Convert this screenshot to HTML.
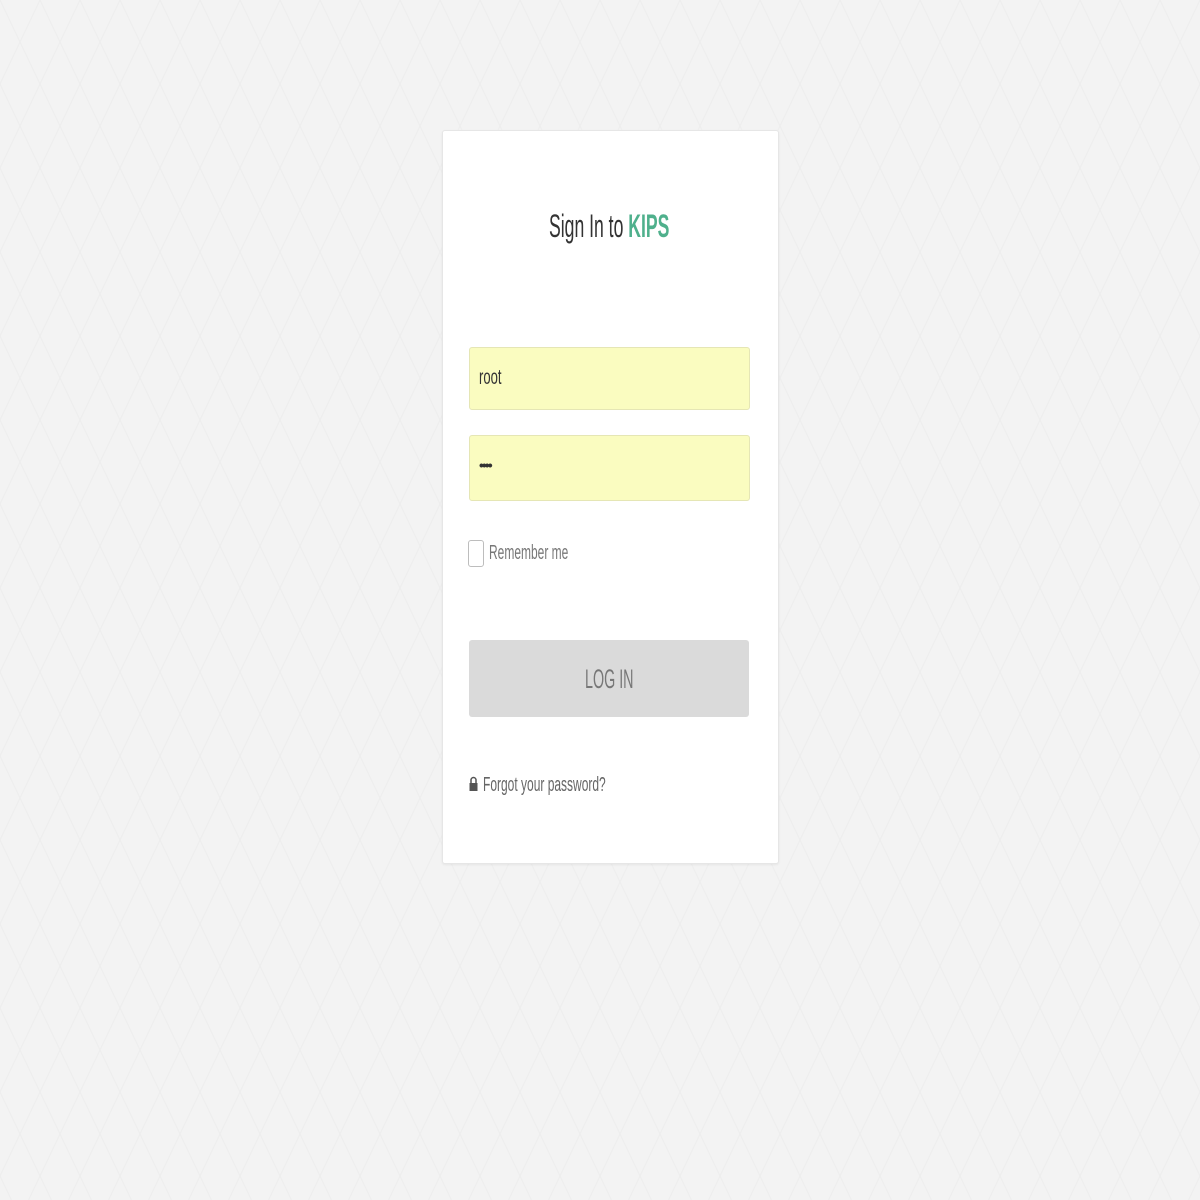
<!DOCTYPE html>
<html><head><meta charset="utf-8"><style>
html,body{margin:0;padding:0;width:1200px;height:1200px;overflow:hidden;background:#f3f3f3;font-family:"Liberation Sans",sans-serif}
.bg{position:absolute;left:0;top:0;width:1200px;height:1200px}
.card{position:absolute;left:442px;top:130px;width:335px;height:732px;background:#fff;border:1px solid #e6e6e6;border-radius:3px;box-shadow:0 1px 2px rgba(0,0,0,.06)}
.s{position:absolute;display:inline-block;white-space:nowrap;transform-origin:0 50%}
.inp{position:absolute;left:469px;width:279px;background:#fafcc0;border:1px solid #e5e6b5;border-radius:3px}
.btn{position:absolute;left:469px;top:640px;width:280px;height:77px;background:#dadada;border-radius:3px}
.cb{position:absolute;left:468px;top:540px;width:14px;height:25px;border:1px solid #bdbdbd;border-radius:3px;background:#fff}
</style></head><body>
<svg class="bg" width="1200" height="1200"><defs><pattern id="p" width="40" height="84" patternUnits="userSpaceOnUse"><path d="M0 0L20 42L0 84M40 0L20 42L40 84" stroke="#eeeeee" stroke-width="1.2" fill="none"/></pattern></defs><rect width="1200" height="1200" fill="url(#p)"/></svg>
<div class="card"></div>
<span class="s" style="left:549px;top:208px;font-size:32px;transform:scaleX(0.55);color:#333">Sign In to <b style="color:#4fb08c">KIPS</b></span>
<div class="inp" style="top:347px;height:61px"></div>
<span class="s" style="left:479px;top:366px;font-size:21px;transform:scaleX(0.62);color:#333">root</span>
<div class="inp" style="top:435px;height:64px"></div>
<span class="s" style="left:479px;top:457px;font-size:14px;color:#333;letter-spacing:-2px;font-weight:bold">••••</span>
<div class="cb"></div>
<span class="s" style="left:489px;top:542px;font-size:20px;transform:scaleX(0.6);color:#777">Remember me</span>
<div class="btn"></div>
<span class="s" style="left:585px;top:664px;font-size:27px;transform:scaleX(0.53);color:#777">LOG IN</span>
<svg style="position:absolute;left:469px;top:776px" width="9" height="16" viewBox="0 0 9 16"><path d="M2 7V4a2.5 2.5 0 0 1 5 0v3" stroke="#555" stroke-width="1.5" fill="none"/><rect x="0.5" y="7" width="8" height="8" fill="#555"/></svg>
<span class="s" style="left:483px;top:774px;font-size:20px;transform:scaleX(0.6);color:#666">Forgot your password?</span>
</body></html>
